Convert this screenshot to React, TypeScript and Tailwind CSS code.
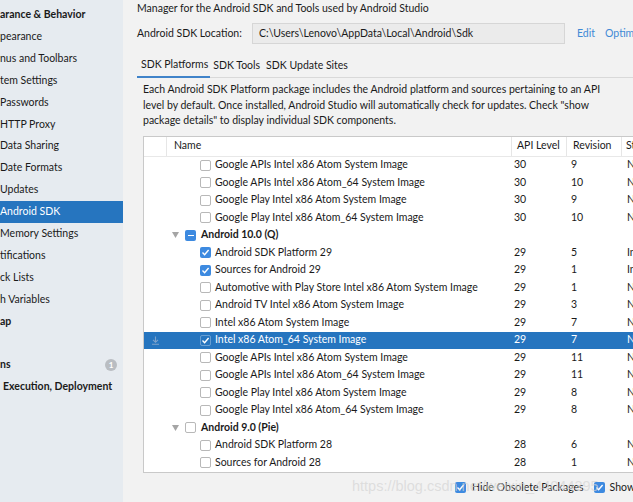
import { Fragment } from 'react';

type Row =
  | { kind: 'group'; name: string; state: 'partial' | 'none' }
  | {
      kind: 'item';
      name: string;
      api: string;
      rev: string;
      status: string;
      checked?: boolean;
      selected?: boolean;
    };

const sidebar = [
  { label: 'arance & Behavior', bold: true },
  { label: 'pearance' },
  { label: 'nus and Toolbars' },
  { label: 'tem Settings' },
  { label: 'Passwords' },
  { label: 'HTTP Proxy' },
  { label: 'Data Sharing' },
  { label: 'Date Formats' },
  { label: 'Updates' },
  { label: 'Android SDK', active: true },
  { label: 'Memory Settings' },
  { label: 'tifications' },
  { label: 'ck Lists' },
  { label: 'h Variables' },
  { label: 'ap', bold: true },
  { label: '' },
  { label: 'ns', bold: true, badge: '1' },
  { label: 'Execution, Deployment', bold: true, indent: true },
];

const rows: Row[] = [
  { kind: 'item', name: 'Google APIs Intel x86 Atom System Image', api: '30', rev: '9', status: 'Not installed' },
  { kind: 'item', name: 'Google APIs Intel x86 Atom_64 System Image', api: '30', rev: '10', status: 'Not installed' },
  { kind: 'item', name: 'Google Play Intel x86 Atom System Image', api: '30', rev: '9', status: 'Not installed' },
  { kind: 'item', name: 'Google Play Intel x86 Atom_64 System Image', api: '30', rev: '10', status: 'Not installed' },
  { kind: 'group', name: 'Android 10.0 (Q)', state: 'partial' },
  { kind: 'item', name: 'Android SDK Platform 29', api: '29', rev: '5', status: 'Installed', checked: true },
  { kind: 'item', name: 'Sources for Android 29', api: '29', rev: '1', status: 'Installed', checked: true },
  { kind: 'item', name: 'Automotive with Play Store Intel x86 Atom System Image', api: '29', rev: '1', status: 'Not installed' },
  { kind: 'item', name: 'Android TV Intel x86 Atom System Image', api: '29', rev: '3', status: 'Not installed' },
  { kind: 'item', name: 'Intel x86 Atom System Image', api: '29', rev: '7', status: 'Not installed' },
  { kind: 'item', name: 'Intel x86 Atom_64 System Image', api: '29', rev: '7', status: 'Not installed', checked: true, selected: true },
  { kind: 'item', name: 'Google APIs Intel x86 Atom System Image', api: '29', rev: '11', status: 'Not installed' },
  { kind: 'item', name: 'Google APIs Intel x86 Atom_64 System Image', api: '29', rev: '11', status: 'Not installed' },
  { kind: 'item', name: 'Google Play Intel x86 Atom System Image', api: '29', rev: '8', status: 'Not installed' },
  { kind: 'item', name: 'Google Play Intel x86 Atom_64 System Image', api: '29', rev: '8', status: 'Not installed' },
  { kind: 'group', name: 'Android 9.0 (Pie)', state: 'none' },
  { kind: 'item', name: 'Android SDK Platform 28', api: '28', rev: '6', status: 'Not installed' },
  { kind: 'item', name: 'Sources for Android 28', api: '28', rev: '1', status: 'Not installed' },
];

const Check = ({ checked, onBlue }: { checked?: boolean; onBlue?: boolean }) => {
  if (checked) {
    return (
      <span
        className={
          onBlue
            ? 'flex h-[11px] w-[11px] shrink-0 items-center justify-center rounded-[2px] border border-white/30'
            : 'flex h-[11px] w-[11px] shrink-0 items-center justify-center rounded-[2px] bg-[#3d8ae0]'
        }
      >
        <svg width="9" height="9" viewBox="0 0 9 9">
          <path d="M1.5 4.6 L3.6 6.7 L7.6 2" fill="none" stroke="white" strokeWidth="1.4" />
        </svg>
      </span>
    );
  }
  return <span className="block h-[11px] w-[11px] shrink-0 rounded-[2px] border border-[#b8b8b8] bg-white" />;
};

const App = () => {
  return (
    <div className="flex h-[502px] w-[633px] overflow-hidden bg-[#f2f2f2] font-['Lato',sans-serif] text-[10.5px] text-[#1a1a1a]">
      <aside className="w-[123px] shrink-0 overflow-hidden bg-[#e6ebf0] pt-[4px]">
        {sidebar.map((s, i) => (
          <div
            key={i}
            className={
              'flex h-[21.9px] items-center whitespace-nowrap ' +
              (s.active ? 'bg-[#2675bf] text-white ' : '') +
              (s.bold ? 'font-bold ' : '') +
              (s.indent ? 'pl-[3px]' : '')
            }
          >
            <span className="flex-1">{s.label}</span>
            {s.badge && (
              <span className="mr-[6px] flex h-[12px] w-[12px] items-center justify-center rounded-full bg-[#b9bdc2] text-[8px] font-bold text-white">
                {s.badge}
              </span>
            )}
          </div>
        ))}
      </aside>

      <main className="relative min-w-0 flex-1 overflow-hidden pl-[14px]">
        <div className="h-[17px] leading-[17px] whitespace-nowrap">
          Manager for the Android SDK and Tools used by Android Studio
        </div>
        <div className="mt-[6px] flex h-[21px] items-center whitespace-nowrap">
          <span className="w-[115px] shrink-0">Android SDK Location:</span>
          <div className="flex h-[21px] w-[313px] shrink-0 items-center border border-[#d6d6d6] bg-[#ebebeb] pl-[6px]">
            C:\Users\Lenovo\AppData\Local\Android\Sdk
          </div>
          <span className="ml-[12px] shrink-0 text-[#3f8ad6]">Edit</span>
          <span className="ml-[10px] shrink-0 text-[#3f8ad6]">Optimize disk space</span>
        </div>
        <div className="mt-[10px] flex h-[24px] w-[600px] border-b border-[#d9d9d9] whitespace-nowrap">
          <div className="-mb-px flex items-center border-b-2 border-[#4083c9] pr-[2px] pl-[4px]">SDK Platforms</div>
          <div className="flex items-center px-[3px]">SDK Tools</div>
          <div className="flex items-center px-[3px]">SDK Update Sites</div>
        </div>
        <p className="mt-[4px] ml-[6px] leading-[15.5px] whitespace-nowrap">
          Each Android SDK Platform package includes the Android platform and sources pertaining to an API
          <br />
          level by default. Once installed, Android Studio will automatically check for updates. Check "show
          <br />
          package details" to display individual SDK components.
        </p>

        <div className="mt-[7px] ml-[6px] h-[337px] w-[540px] overflow-hidden border border-[#c9c9c9] bg-white">
          <div className="flex h-[20px] items-center border-b border-[#e8e8e8] whitespace-nowrap">
            <div className="h-full w-[23px] shrink-0 border-r border-[#e6e6e6]" />
            <div className="w-[344px] shrink-0 pl-[7px]">Name</div>
            <div className="flex h-full w-[55px] shrink-0 items-center border-l border-[#e6e6e6] pl-[5px]">API Level</div>
            <div className="flex h-full w-[55px] shrink-0 items-center border-l border-[#e6e6e6] pl-[6px]">Revision</div>
            <div className="flex h-full flex-1 items-center border-l border-[#e6e6e6] pl-[4px]">Status</div>
          </div>
          {rows.map((r, i) => (
            <Fragment key={i}>
              {r.kind === 'group' ? (
                <div className="flex h-[17.5px] items-center whitespace-nowrap">
                  <div className="w-[23px] shrink-0" />
                  <svg width="7" height="6" viewBox="0 0 7 6" className="ml-[5px] shrink-0">
                    <polygon points="0,0 7,0 3.5,6" fill="#a5a5a5" />
                  </svg>
                  <span className="ml-[6px] flex">
                    {r.state === 'partial' ? (
                      <span className="flex h-[11px] w-[11px] items-center justify-center rounded-[2px] bg-[#3d8ae0]">
                        <span className="h-[1.5px] w-[6px] bg-white" />
                      </span>
                    ) : (
                      <Check />
                    )}
                  </span>
                  <span className="ml-[5px] font-bold">{r.name}</span>
                </div>
              ) : (
                <div
                  className={
                    'flex h-[17.5px] items-center whitespace-nowrap ' +
                    (r.selected ? 'bg-[#2675bf] text-white' : '')
                  }
                >
                  <div className="flex w-[23px] shrink-0 items-center justify-center">
                    {r.selected && (
                      <svg width="9" height="9" viewBox="0 0 9 9">
                        <path d="M4.5 0.5 V6 M2 3.8 L4.5 6.3 L7 3.8 M1 8.3 H8" fill="none" stroke="#7ea3cc" strokeWidth="1.1" />
                      </svg>
                    )}
                  </div>
                  <div className="flex w-[345px] shrink-0 items-center pl-[33px]">
                    <Check checked={r.checked} onBlue={r.selected} />
                    <span className="ml-[4px]">{r.name}</span>
                  </div>
                  <div className="w-[55px] shrink-0 pl-[2px]">{r.api}</div>
                  <div className="w-[55px] shrink-0 pl-[4px]">{r.rev}</div>
                  <div className="flex-1 pl-[5px]">{r.status}</div>
                </div>
              )}
            </Fragment>
          ))}
        </div>

        <div className="mt-[8px] flex h-[14px] items-center whitespace-nowrap pl-[318px]">
          <Check checked />
          <span className="ml-[6px]">Hide Obsolete Packages</span>
          <span className="ml-[10px] flex">
            <Check checked />
          </span>
          <span className="ml-[5px]">Show Package Details</span>
        </div>

        <div className="pointer-events-none absolute left-[229px] top-[476px] whitespace-nowrap font-['Liberation_Sans',sans-serif] text-[14.5px] text-[#d4d4d4]/70">
          https://blog.csdn.net/weixin_44044395
        </div>
      </main>
    </div>
  );
};

export default App;
